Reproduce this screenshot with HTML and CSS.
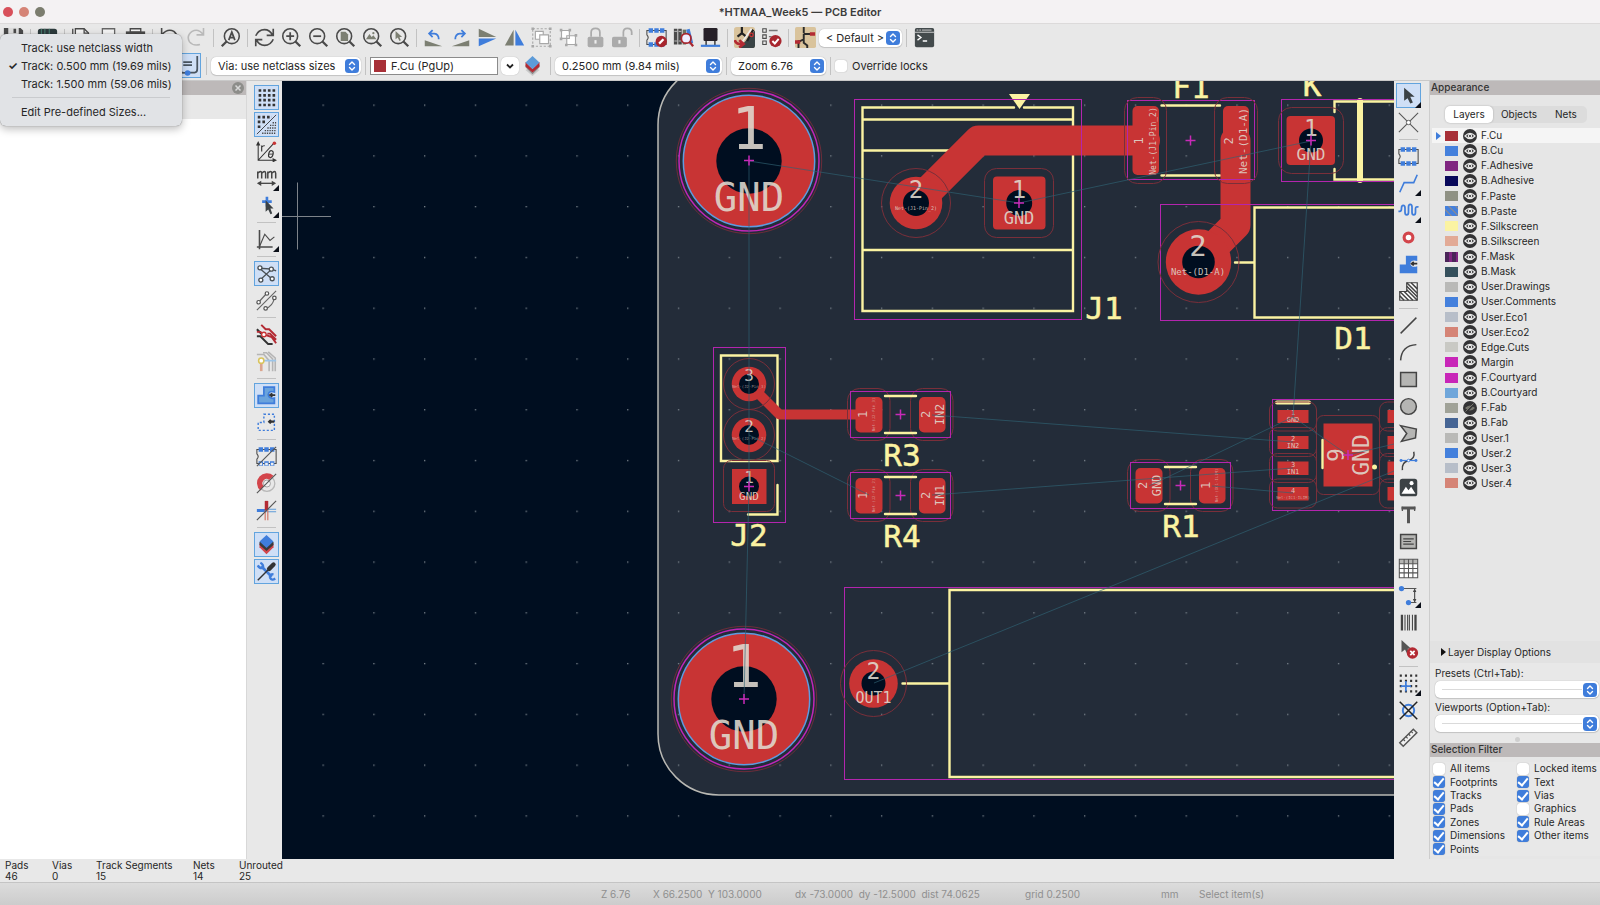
FILE: index.html
```html
<!DOCTYPE html>
<html lang="en">
<head>
<meta charset="utf-8">
<title>*HTMAA_Week5 — PCB Editor</title>
<link rel="stylesheet" href="styles.css">
</head>
<body>
<svg class="defs" aria-hidden="true">
  <symbol id="eye" viewBox="0 0 14 14"><circle cx="7" cy="7" r="7" fill="#333335"/><path d="M2 7Q7 1.800 12 7Q7 12.200 2 7Z" fill="none" stroke="#e8e8e8" stroke-width="1.200"/><circle cx="7" cy="7" r="1.700" fill="none" stroke="#e8e8e8" stroke-width="1.200"/></symbol>
  <symbol id="eye-off" viewBox="0 0 14 14"><circle cx="7" cy="7" r="7" fill="#333335"/><path d="M2 7Q7 2 12 7Q7 12 2 7Z" fill="#77776f"/><path d="M3 11L11 3" stroke="#333335" stroke-width="1.800"/><path d="M2.500 10.500L10.500 2.500" stroke="#77776f" stroke-width="1"/></symbol>
  <symbol id="step" viewBox="0 0 14 14"><rect width="14" height="14" rx="3.500" fill="#3f7ddb"/><path d="M4.500 5.500L7 3L9.500 5.500M4.500 8.500L7 11L9.500 8.500" fill="none" stroke="#fff" stroke-width="1.400" stroke-linecap="round" stroke-linejoin="round"/></symbol>
  <symbol id="lens" viewBox="0 0 24 24"><circle cx="10.500" cy="10.500" r="8.500" fill="none" stroke="#4a4a4a" stroke-width="1.800"/><path d="M16.500 16.500L22 22" stroke="#4a4a4a" stroke-width="2.600"/></symbol>
  <symbol id="fp" viewBox="0 0 24 24"><path d="M1 4H23V20H1V15Q4 12 1 9Z" fill="none" stroke="#4a4a4a" stroke-width="1.200"/><path d="M3 1.500h5v5h-5zM9.500 1.500h5v5h-5zM16 1.500h5v5h-5zM3 17.500h5v5h-5zM9.500 17.500h5v5h-5zM16 17.500h5v5h-5z" fill="#3f7ddb"/></symbol>
  <symbol id="cross" viewBox="-6 -6 12 12"><path d="M-5 0H5M0 -5V5" stroke="#c82ab8" stroke-width="1.500"/></symbol>
  <symbol id="hole" viewBox="-75 -75 150 150">
    <circle r="72.700" fill="none" stroke="#6d2c39"/><circle r="70" fill="none" stroke="#c026b8" stroke-width="1.500"/><circle r="65.700" fill="#c83434" stroke="#5f9be0" stroke-width="1.500"/><circle r="32.700" fill="#000e20"/>
  </symbol>
</svg>

<header class="titlebar">
  <div class="lights"><button class="light close" aria-label="Close"></button><button class="light mini" aria-label="Minimize"></button><button class="light full" aria-label="Full screen"></button></div>
  <h1>*HTMAA_Week5 — PCB Editor</h1>
</header>

<div class="toolbars">
  <div class="bar">
    <button class="tool" aria-label="Save"><svg viewBox="0 0 24 24"><path d="M1 1H20L23 4V23H1Z" fill="#4a4a4a"/><path d="M6 1H18V9H6Z" fill="#ddd"/><path d="M12 2h3v5h-3z" fill="#4a4a4a"/></svg></button>
    <span class="sep"></span>
    <button class="tool" aria-label="Board setup"><svg viewBox="0 0 24 24"><rect x="1" y="2" width="22" height="20" rx="3" fill="#2c3a3c"/><path d="M5 2v8M9 2v6M14 2v8" stroke="#4c8a78"/></svg></button>
    <span class="sep"></span>
    <button class="tool" aria-label="Page settings"><svg viewBox="0 0 24 24"><path d="M5 2H15L20 7V23H5Z" fill="#f4f4f4" stroke="#4a4a4a" stroke-width="1.500"/><path d="M15 2V7H20M2 2V22" fill="none" stroke="#4a4a4a" stroke-width="1.500"/></svg></button>
    <button class="tool" aria-label="Print"><svg viewBox="0 0 24 24"><path d="M5 2H19V9H5Z" fill="#f4f4f4" stroke="#666" stroke-width="1.500"/><path d="M2 9H22V19H2Z" fill="#777"/></svg></button>
    <button class="tool" aria-label="Plot"><svg viewBox="0 0 24 24"><path d="M6 2H18V6H6Z" fill="#f4f4f4" stroke="#4a4a4a" stroke-width="1.500"/><path d="M1 5H23V16H1Z" fill="#4a4a4a"/></svg></button>
    <span class="sep"></span>
    <button class="tool" aria-label="Undo"><svg viewBox="0 0 24 24"><path d="M3 1V9H11M3 9Q10 1 17 5Q23 10 19 17Q16 22 8 21" fill="none" stroke="#4a4a4a" stroke-width="1.800"/></svg></button>
    <button class="tool" aria-label="Redo"><svg viewBox="0 0 24 24"><path d="M20 1V9H12M20 9Q14 1 7 5Q0 10 4 17Q8 22 16 20" fill="none" stroke="#b9b9b9" stroke-width="1.800"/></svg></button>
    <span class="sep"></span>
    <button class="tool" aria-label="Find"><svg viewBox="0 0 24 24"><circle cx="13.500" cy="10.500" r="8.500" fill="none" stroke="#4a4a4a" stroke-width="1.800"/><path d="M7.500 16.500L2 22" stroke="#4a4a4a" stroke-width="2.600"/><path d="M10 15L13.500 6L17 15M11 12.200H16" fill="none" stroke="#4a4a4a" stroke-width="2"/></svg></button>
    <span class="sep"></span>
    <button class="tool" aria-label="Refresh"><svg viewBox="0 0 24 24"><path d="M2 10Q5 3 12 3Q18 3 21 9M22 2V9.500H14.500M22 14Q19 21 12 21Q6 21 3 15M2 22V14.500H9.500" fill="none" stroke="#4a4a4a" stroke-width="1.900"/></svg></button>
    <button class="tool" aria-label="Zoom in"><svg viewBox="0 0 24 24"><use href="#lens"/><path d="M6 10.500H15M10.500 6V15" stroke="#4a4a4a" stroke-width="2"/></svg></button>
    <button class="tool" aria-label="Zoom out"><svg viewBox="0 0 24 24"><use href="#lens"/><path d="M6 10.500H15" stroke="#4a4a4a" stroke-width="2"/></svg></button>
    <button class="tool" aria-label="Zoom to fit"><svg viewBox="0 0 24 24"><use href="#lens"/><path d="M6.500 5.500H12L15 8.500V16H6.500Z" fill="#7c7f72"/></svg></button>
    <button class="tool" aria-label="Zoom to objects"><svg viewBox="0 0 24 24"><use href="#lens"/><path d="M4.500 14L8.500 8L11 11.500L13 9.500L16.500 14Z" fill="#7c7f72"/><circle cx="13" cy="7" r="1.300" fill="#7c7f72"/></svg></button>
    <button class="tool" aria-label="Zoom to selection"><svg viewBox="0 0 24 24"><use href="#lens"/><path d="M7.500 4.500V14L10 12L12 16L13.500 15L12 11.500H15Z" fill="#7c7f72"/></svg></button>
    <span class="sep"></span>
    <button class="tool" aria-label="Rotate counterclockwise"><svg viewBox="0 0 24 24"><path d="M2 15V22H22Z" fill="#7c7f72"/><path d="M8 7.500H13Q18 8 18 14M11 3.500L7 7.500L11 11.500" fill="none" stroke="#3f7ddb" stroke-width="2"/></svg></button>
    <button class="tool" aria-label="Rotate clockwise"><svg viewBox="0 0 24 24"><path d="M22 15V22H2Z" fill="#7c7f72"/><path d="M16 7.500H11Q6 8 6 14M13 3.500L17 7.500L13 11.500" fill="none" stroke="#3f7ddb" stroke-width="2"/></svg></button>
    <button class="tool" aria-label="Flip vertical"><svg viewBox="0 0 24 24"><path d="M2 2V11.500H22Z" fill="#7c7f72"/><path d="M2 22V13H22Z" fill="#3f7ddb"/></svg></button>
    <button class="tool" aria-label="Flip horizontal"><svg viewBox="0 0 24 24"><path d="M11 3V21H1Z" fill="#7c7f72"/><path d="M13 3V21H23Z" fill="#3f7ddb"/></svg></button>
    <button class="tool" aria-label="Group"><svg viewBox="0 0 24 24"><path d="M2 2H22V22H2Z" fill="none" stroke="#a8a8a8" stroke-width="1.300" stroke-dasharray="2.500 2"/><path d="M0.500 0.500h3v3h-3zM20.500 0.500h3v3h-3zM0.500 20.500h3v3h-3zM20.500 20.500h3v3h-3z" fill="#a8a8a8"/><path d="M5 5H14V14H5Z" fill="#fff" stroke="#a8a8a8" stroke-width="1.300"/><path d="M10 9H20V19H10Z" fill="#fff" stroke="#a8a8a8" stroke-width="1.300"/></svg></button>
    <button class="tool" aria-label="Ungroup"><svg viewBox="0 0 24 24"><path d="M4 4H13V13H4ZM10 10H20V20H10Z" fill="#fff" stroke="#a8a8a8" stroke-width="1.300"/><path d="M2 2h3v3h-3zM12 2h3v3h-3zM2 12h3v3h-3zM19 8h3v3h-3zM8 19h3v3h-3zM19 19h3v3h-3z" fill="#a8a8a8"/></svg></button>
    <button class="tool" aria-label="Lock"><svg viewBox="0 0 24 24"><rect x="3" y="11" width="18" height="12" rx="2" fill="#ababab"/><path d="M7 11V6Q7 1.500 12 1.500Q17 1.500 17 6V11" fill="none" stroke="#ababab" stroke-width="2"/><path d="M12 15v4" stroke="#eee" stroke-width="2.400"/></svg></button>
    <button class="tool" aria-label="Unlock"><svg viewBox="0 0 24 24"><rect x="0" y="11" width="17" height="12" rx="2" fill="#ababab"/><path d="M13 11V6Q13 1.500 17.500 1.500Q22.500 1.500 22.500 6V9" fill="none" stroke="#ababab" stroke-width="2"/><path d="M8.500 15v4" stroke="#eee" stroke-width="2.400"/></svg></button>
    <span class="sep"></span>
    <button class="tool" aria-label="Footprint editor"><svg viewBox="0 0 24 24"><use href="#fp"/><circle cx="17.500" cy="16.500" r="6.500" fill="#a8262e"/><path d="M15 19L20 14" stroke="#fff" stroke-width="2.600"/></svg></button>
    <button class="tool" aria-label="Footprint browser"><svg viewBox="0 0 24 24"><path d="M1 2h4v18h-4zM6 2h4v18h-4z" fill="#4a4a4a"/><path d="M1.500 5h3M6.500 5h3M1.500 16h3M6.500 16h3" stroke="#ccc"/><path d="M11 3h4v17h-4z" fill="#6b705f"/><path d="M15 3L19 2L23 18L19 20Z" fill="#3f7ddb"/><circle cx="15" cy="13" r="5.500" fill="#eef" stroke="#a8262e" stroke-width="2"/><path d="M19 17L23 22" stroke="#a8262e" stroke-width="2.600"/></svg></button>
    <button class="tool" aria-label="3D viewer"><svg viewBox="0 0 24 24"><rect x="4" y="1" width="16" height="15" rx="1.500" fill="#262028"/><path d="M7 16v5M17 16v5" stroke="#555" stroke-width="2"/><path d="M1 21.500H23" stroke="#3f7ddb" stroke-width="2.500"/></svg></button>
    <span class="sep"></span>
    <button class="tool" aria-label="Update from schematic"><svg viewBox="0 0 24 24"><rect x="0" y="0" width="24" height="24" rx="3" fill="#d9c39c"/><path d="M24 4V21Q24 24 21 24H6Z" fill="#3a4446"/><path d="M9 0V7L4 11M9 7L14 11M15 16L22 3" fill="none" stroke="#222" stroke-width="2.500"/><path d="M6 22L20 2" stroke="#eee" stroke-width="1.800"/><circle cx="20" cy="9" r="2" fill="none" stroke="#c83434" stroke-width="1.500"/><path d="M1 15Q2 20 9 19.500M6 15L11 19.500L6 23.500" fill="none" stroke="#b32a33" stroke-width="3"/></svg></button>
    <button class="tool" aria-label="Design rules check"><svg viewBox="0 0 24 24"><path d="M2 2h4v4h-4zM2 9h4v4h-4zM2 16h4v4h-4z" fill="none" stroke="#4a4a4a" stroke-width="1.200"/><path d="M9 4H19M9 11H12" stroke="#777" stroke-width="1.500"/><circle cx="16.500" cy="16" r="7" fill="#a8262e"/><path d="M13 16L15.800 18.800L20.200 13.500" fill="none" stroke="#fff" stroke-width="2.200"/></svg></button>
    <span class="sep"></span>
    <button class="tool" aria-label="Schematic editor"><svg viewBox="0 0 24 24"><rect x="0" y="0" width="24" height="24" rx="2" fill="#d9c39c"/><path d="M10 0V7M10 8H18M10 8V14L4 17M10 14V18L14 21V24M4 15V24" fill="none" stroke="#2a2a2a" stroke-width="2.200"/><path d="M17 6h6v4h-6zM0 15h6v4h-6z" fill="#b32a33"/></svg></button>
    <label class="combo mid"><select aria-label="Layout"><option>&lt; Default &gt;</option></select><svg><use href="#step"/></svg></label>
    <span class="sep wide"></span>
    <button class="tool" aria-label="Scripting console"><svg viewBox="0 0 24 24"><rect x="1" y="1" width="22" height="22" rx="2" fill="#434a4c"/><path d="M1 6H23" stroke="#ddd" stroke-width="1"/><path d="M3 3.500h2M6 3.500h2M9 3.500h11" stroke="#ddd"/><path d="M4 9L8 12L4 15M10 16H15" fill="none" stroke="#fff" stroke-width="1.500"/></svg></button>
  </div>
  <div class="bar second">
    <button class="tool on" aria-label="Use existing track width"><svg viewBox="0 0 24 24"><path d="M1 19Q5 21 10 20H19Q22 20 22 16V1M6 8H16M6 11.500H16" fill="none" stroke="#4a5560" stroke-width="2"/><circle cx="11" cy="20.500" r="3.200" fill="#3f7ddb"/></svg></button>
    <span class="sep wide"></span>
    <label class="combo via"><select aria-label="Via size"><option>Via: use netclass sizes</option></select><svg><use href="#step"/></svg></label>
    <span class="sep wide"></span>
    <label class="layerbox"><i class="sw cu"></i><select aria-label="Active layer"><option>F.Cu (PgUp)</option></select></label>
    <button class="drop" aria-label="Open layer list"><svg viewBox="0 0 10 10"><path d="M2 3.500L5 6.500L8 3.500" fill="none" stroke="#222" stroke-width="1.800"/></svg></button>
    <button class="tool" aria-label="Layer pair"><svg viewBox="0 0 24 24"><path d="M4 17L12 24L20 17L12 13Z" fill="#c9c9c9"/><path d="M4 11L12 20L20 11V14L12 22L4 14Z" fill="#8a8a8a"/><path d="M4 8V13L12 20L20 13V8L12 16Z" fill="#b32a33"/><path d="M12 1L20 8.500L12 16L4 8.500Z" fill="#5d9bd8"/></svg></button>
    <span class="sep wide"></span>
    <label class="combo grid"><select aria-label="Grid"><option>0.2500 mm (9.84 mils)</option></select><svg><use href="#step"/></svg></label>
    <span class="sep wide"></span>
    <label class="combo zoom"><select aria-label="Zoom"><option>Zoom 6.76</option></select><svg><use href="#step"/></svg></label>
    <span class="sep wide"></span>
    <label class="check locks"><input type="checkbox">Override locks</label>
  </div>
</div>

<main class="work">
  <aside class="left">
    <div class="cap"><button class="x" aria-label="Close panel"><svg viewBox="0 0 12 12"><circle cx="6" cy="6" r="6" fill="#8d8d8a"/><path d="M3.500 3.500L8.500 8.500M8.500 3.500L3.500 8.500" stroke="#d8d8d8" stroke-width="1.500"/></svg></button></div>
    <div class="list"></div>
  </aside>

  <nav class="tools" aria-label="Display tools">
    <button class="tool on" aria-label="Grid"><svg viewBox="0 0 24 24"><path d="M3 4H22M3 9.500H22M3 15H22M3 20.500H22" stroke="#333" stroke-width="3" stroke-dasharray="3 2.300"/></svg></button>
    <button class="tool on" aria-label="Grid overrides"><svg viewBox="0 0 24 24"><path d="M2 3.500H18M2 9H12M2 14.500H6" stroke="#333" stroke-width="3" stroke-dasharray="3 2.300"/><path d="M1 23L23 1" stroke="#333"/><path d="M19 10H23M16 13H23M13 16H23M10 19H23M7 22H23" stroke="#444" stroke-width="1.500" stroke-dasharray="1.500 1.200"/></svg></button>
    <button class="tool" aria-label="Polar coordinates"><svg viewBox="0 0 24 24"><path d="M2.500 3V22H22M2.500 22L20 3" fill="none" stroke="#333" stroke-width="1.200"/><path d="M2.500 0L5 5H0ZM24 22L19 19.500V24.500Z" fill="#333"/><circle cx="21" cy="2.500" r="2" fill="#c83434"/><path d="M6.500 12V5M6.500 7Q8 5 10 5.500" fill="none" stroke="#333" stroke-width="1.300"/><ellipse cx="17" cy="15" rx="2.500" ry="4" transform="rotate(15 17 15)" fill="none" stroke="#333" stroke-width="1.300"/><path d="M14.500 15H19.500" stroke="#333"/></svg></button>
    <button class="tool more" aria-label="Units"><svg viewBox="0 0 24 24"><path d="M2 12V4M2 6Q6 2 6.500 6V12M6.500 6Q10.500 2 11 6V12M13.500 12V4M13.500 6Q17.500 2 18 6V12M18 6Q22 2 22.500 6V12" fill="none" stroke="#444" stroke-width="1.700"/><path d="M3 17.500H21" stroke="#444" stroke-width="1.500"/><path d="M1 17.500L6 14.500V20.500ZM23 17.500L18 14.500V20.500Z" fill="#444"/></svg></button>
    <button class="tool more" aria-label="Cursor"><svg viewBox="0 0 24 24"><path d="M7 7.500H18M12.500 2V13" stroke="#3f7ddb" stroke-width="3"/><path d="M11 6V19L14 16.500L16.500 22L18.500 21L16.500 15.500H20Z" fill="#3c4245"/></svg></button>
    <span class="hsep"></span>
    <button class="tool more" aria-label="Line modes"><svg viewBox="0 0 24 24"><path d="M4 1V23M1 20.500H19" stroke="#4a4a4a" stroke-width="1.800"/><path d="M4 20L10 6L16 13L21 9" fill="none" stroke="#4a4a4a" stroke-width="1.300"/></svg></button>
    <span class="hsep"></span>
    <button class="tool on" aria-label="Ratsnest"><svg viewBox="0 0 24 24"><path d="M4 6L18 7L4 20M4 6L18 18M18 7L23 9" fill="none" stroke="#4a5055" stroke-width="1.500"/><g fill="#fff" stroke="#4a5055" stroke-width="1.500"><circle cx="4.500" cy="5.500" r="2.300"/><circle cx="17.500" cy="7" r="2.300"/><circle cx="5.500" cy="19.500" r="2.300"/><circle cx="18.500" cy="18" r="2.300"/></g></svg></button>
    <button class="tool" aria-label="Curved ratsnest"><svg viewBox="0 0 24 24"><path d="M1 23L23 1M3 14L12 4M11 21Q19 19 21 9" fill="none" stroke="#666" stroke-width="1.300"/><g fill="#fff" stroke="#555" stroke-width="1.400"><circle cx="3" cy="14" r="2"/><circle cx="12.500" cy="4" r="2"/><circle cx="11" cy="21" r="2"/><circle cx="21" cy="9" r="2"/></g></svg></button>
    <span class="hsep"></span>
    <button class="tool" aria-label="High contrast"><svg viewBox="0 0 24 24"><path d="M1 14H5L14 23H19M1 6L7 12" fill="none" stroke="#333" stroke-width="2.300"/><path d="M6 1L11 6H15L23 14M1 9H5L9 12L18 15L23 22M13 11H16L23 18" fill="none" stroke="#b32a33" stroke-width="2.200"/><circle cx="9" cy="12" r="2.600" fill="#fff" stroke="#c83434" stroke-width="1.500"/></svg></button>
    <button class="tool" aria-label="Net highlighting"><svg viewBox="0 0 24 24"><path d="M1 4H9L15 11V23M8 2H12L19 9V23M14 1L22 8V23" fill="none" stroke="#b5b5b5" stroke-width="1.800"/><path d="M6 11H23" stroke="#9cc5e8" stroke-width="2"/><path d="M6 13V23" stroke="#dba58e" stroke-width="3"/><circle cx="6" cy="11" r="3" fill="#fff" stroke="#d9c45c" stroke-width="1.800"/></svg></button>
    <span class="hsep"></span>
    <button class="tool on" aria-label="Filled zones"><svg viewBox="0 0 24 24"><path d="M9 2.500H21V8Q15 6 14 11Q15 16 21 15V21H2.500V12H9Z" fill="#6aa3dc" stroke="#3f7ddb" stroke-width="2"/><path d="M16 11.500H22M18.500 9.500L16 11.500L18.500 13.500" fill="#333" stroke="#333" stroke-width="2"/></svg></button>
    <button class="tool" aria-label="Zone outlines"><svg viewBox="0 0 24 24"><path d="M9 2.500H21V21H2.500V12H9Z" fill="none" stroke="#3f7ddb" stroke-width="1.600" stroke-dasharray="2.400 2.200"/><path d="M15 11H21M17 9L15 11L17 13" fill="#333" stroke="#333" stroke-width="2.400"/></svg></button>
    <span class="hsep"></span>
    <button class="tool" aria-label="Footprint outlines"><svg viewBox="0 0 24 24"><use href="#fp"/><path d="M4 19h3v3h-3zM10.500 19h3v3h-3zM17 19h3v3h-3z" fill="#eee"/><path d="M1 23L23 1" stroke="#555" stroke-width="1.300"/></svg></button>
    <button class="tool" aria-label="Via outlines"><svg viewBox="0 0 24 24"><circle cx="12.500" cy="12" r="9" fill="#e8e8e8" stroke="#b8b8b8" stroke-width="1.500"/><path d="M5 20A11 11 0 0 1 20 3L15 8A4.500 4.500 0 0 0 9 15Z" fill="#d3454b"/><circle cx="12.500" cy="12" r="4" fill="#f2f2f2" stroke="#999"/><path d="M1 23L23 1" stroke="#555" stroke-width="1.300"/></svg></button>
    <button class="tool" aria-label="Track outlines"><svg viewBox="0 0 24 24"><path d="M1 12H12" stroke="#3f7ddb" stroke-width="3.500"/><path d="M12 10.500H23M12 13.500H23" stroke="#5d9bd8" stroke-width="1.200"/><path d="M12 1V12" stroke="#b32a33" stroke-width="4"/><path d="M10.500 12V23M13.500 12V23" stroke="#d37b6a" stroke-width="1.400"/><path d="M1 23L23 1" stroke="#555" stroke-width="1.300"/></svg></button>
    <span class="hsep"></span>
    <button class="tool on" aria-label="Appearance manager"><svg viewBox="0 0 24 24"><path d="M4 11L12 6L20 11V15L12 23L4 15Z" fill="#d3454b"/><path d="M4 9L20 9V12.500L12 19.500L4 12.500Z" fill="#3a3a3a"/><path d="M12 1L20 8.500L12 16L4 8.500Z" fill="#3f7ddb"/></svg></button>
    <button class="tool on" aria-label="Properties manager"><svg viewBox="0 0 24 24"><path d="M6 6L18 18" stroke="#3f7ddb" stroke-width="3"/><path d="M2 5Q4 9 8 8Q9 4 5 2M16 19Q18 23 22 20M16 19Q15 15 20 15" fill="none" stroke="#3f7ddb" stroke-width="2.600"/><path d="M2 22L14 10" stroke="#333" stroke-width="1.600"/><path d="M15 9L20 4" stroke="#333" stroke-width="5" stroke-linecap="round"/></svg></button>
  </nav>

  <section class="canvas">
    <svg viewBox="282 81 1112 778" preserveAspectRatio="xMinYMin slice" role="img" aria-label="Board layout">
      <defs>
        <pattern id="dots" x="297.600" y="79.600" width="50.770" height="50.770" patternUnits="userSpaceOnUse"><rect x="24.900" y="24.900" width="1.300" height="1.300" fill="#7a848c"/></pattern>
      </defs>
      <rect x="282" y="81" width="3000" height="2000" fill="#000e20"/>
      <rect x="658" y="64" width="3000" height="731" rx="61" fill="#232c39" stroke="#b9b9b4" stroke-width="1.500"/>
      <rect x="282" y="81" width="3000" height="2000" fill="url(#dots)"/>

      <g class="silk">
        <path d="M1014 107.500H862.500V311H1073V107.500H1024M862.500 119.500H1073M862.500 150.500H1073M862.500 250H1073"/>
        <path d="M1009 94H1030L1019.500 109Z" fill="#fbf3a2" stroke="none"/>
        <path d="M1161.500 105.500H1220M1161.500 175.500H1220"/>
        <path d="M1334.500 112V101.500H3000M1334.500 169V179.500H3000"/>
        <path class="bar6" d="M1360 101V180"/>
        <path d="M3000 207.500H1254.500V317.500H3000M1235 262.500H1254"/>
        <path d="M721 355.500H777.500V461H721ZM777.500 485V514.500H748"/>
        <path d="M3000 590H949.500V777H3000M902.500 683.500H949.500"/>
        <path class="bar4" d="M1277 402.500H1309"/>
      </g>

      <g class="track">
        <path d="M916 203L978.500 140.500H1145" stroke-width="30"/>
        <path d="M1235.500 140.500V225L1198.500 262" stroke-width="30"/>
        <path d="M749 384L779.500 414.500H869" stroke-width="10"/>
      </g>

      <g class="yard">
        <rect x="854.500" y="99.500" width="227" height="220"/>
        <rect x="1127.500" y="100.500" width="127" height="79"/>
        <rect x="1281.500" y="99.500" width="2000" height="82"/>
        <rect x="1160.500" y="204.500" width="2000" height="116"/>
        <rect x="713.500" y="347.500" width="72" height="175"/>
        <rect x="1272.500" y="399.500" width="2000" height="111"/>
        <rect x="844.500" y="587.500" width="2000" height="192"/>
      </g>

      <g class="clear">
        <circle cx="916" cy="203" r="34.500"/><rect x="984.500" y="168.500" width="69" height="69" rx="12"/>
        <rect x="1124.500" y="97.500" width="42" height="86" rx="13"/><rect x="1214.500" y="97.500" width="43" height="86" rx="13"/>
        <rect x="1278.500" y="107.500" width="65" height="66" rx="13"/><circle cx="1198.500" cy="262" r="40.500"/>
        <circle cx="749" cy="384" r="25.500"/><circle cx="749" cy="435" r="25.500"/><rect x="723.500" y="460.500" width="51" height="51" rx="8"/>
        <circle cx="873.500" cy="683.500" r="33"/>
        <rect x="1269.500" y="402" width="47" height="29" rx="8"/><rect x="1269.500" y="427.500" width="47" height="29" rx="8"/><rect x="1269.500" y="453.500" width="47" height="29" rx="8"/><rect x="1269.500" y="479" width="47" height="29" rx="8"/>
        <rect x="1379.500" y="402" width="47" height="29" rx="8"/><rect x="1379.500" y="427.500" width="47" height="29" rx="8"/><rect x="1379.500" y="453.500" width="47" height="29" rx="8"/><rect x="1379.500" y="479" width="47" height="29" rx="8"/>
        <rect x="1316.500" y="415.500" width="63" height="79" rx="7"/>
      </g>

      <g class="pads">
        <use href="#hole" x="674" y="86" width="150" height="150"/><use href="#hole" x="669" y="624" width="150" height="150"/>
        <circle cx="916" cy="203" r="26.300"/><rect x="993" y="176.500" width="52.500" height="53" rx="4"/>
        <rect x="1132.500" y="106" width="26.500" height="69" rx="5"/><rect x="1223" y="106" width="26" height="69" rx="5"/>
        <rect x="1286.500" y="116" width="48.500" height="49" rx="4"/><circle cx="1198.500" cy="262" r="32.700"/>
        <circle cx="749" cy="384" r="17.300"/><circle cx="749" cy="435" r="17.300"/><rect x="732" y="469" width="34.500" height="35"/>
        <circle cx="873.500" cy="683.500" r="24.300"/>
        <path d="M1277.500 410h31v13h-31zM1277.500 436h31v13h-31zM1277.500 461.500h31v13.500h-31zM1277.500 487h31v13.500h-31zM1387.500 410h31v13h-31zM1387.500 436h31v13h-31zM1387.500 461.500h31v13.500h-31zM1387.500 487h31v13.500h-31z"/>
        <rect x="1323.500" y="423.500" width="49" height="63"/>
      </g>
      <g fill="#000e20">
        <circle cx="916" cy="203" r="13"/><circle cx="1019.200" cy="203" r="13"/><circle cx="1311" cy="140.500" r="12"/><circle cx="1198.500" cy="262" r="16.300"/>
        <circle cx="749" cy="384" r="10"/><circle cx="749" cy="435" r="10"/><circle cx="749" cy="486.500" r="10"/><circle cx="873.500" cy="683.500" r="12"/>
      </g>

      <g id="res">
        <g class="clear"><rect x="847.500" y="388.500" width="42.500" height="52" rx="12"/><rect x="910.500" y="388.500" width="42.500" height="52" rx="12"/></g>
        <g class="yard"><rect x="850.500" y="391.500" width="100" height="46"/></g>
        <g class="pads"><rect x="855.500" y="397" width="27" height="35.500" rx="5"/><rect x="919" y="397" width="26.500" height="35.500" rx="5"/></g>
        <path class="silk" d="M885 396H916M885 433H916"/>
        <use href="#cross" x="894.500" y="408.500" width="12" height="12"/>
      </g>
      <use href="#res" y="81"/><use href="#res" x="280" y="71"/>
      <path class="silk" d="M1322.500 440V468"/><circle cx="1374.500" cy="467" r="2.500" fill="#fbf3a2"/>

      <g class="padtext">
        <text x="749" y="149" class="f59">1</text><text x="749" y="211" class="f39">GND</text>
        <text x="744" y="687" class="f59">1</text><text x="744" y="749" class="f39">GND</text>
        <text x="916" y="198" class="f24">2</text><text x="916" y="210" class="f5">Net-(J1-Pin_2)</text>
        <text x="1019" y="198" class="f24">1</text><text x="1019" y="224" class="f17">GND</text>
        <text x="1311" y="136" class="f23">1</text><text x="1311" y="160" class="f16">GND</text>
        <text x="1198" y="256" class="f29">2</text><text x="1198" y="275" class="f9">Net-(D1-A)</text>
        <text transform="translate(1143 141) rotate(-90)" class="f12">1</text><text transform="translate(1155.500 141) rotate(-90)" class="f8">Net-(J1-Pin_2)</text>
        <text transform="translate(1233 141) rotate(-90)" class="f12">2</text><text transform="translate(1247 141) rotate(-90)" class="f11">Net-(D1-A)</text>
        <text x="749" y="381" class="f16">3</text><text x="749" y="388" class="f4">Net-(J2-Pin_3)</text>
        <text x="749" y="432" class="f16">2</text><text x="749" y="440" class="f4">Net-(J2-Pin_2)</text>
        <text x="749" y="483" class="f16">1</text><text x="749" y="500" class="f11">GND</text>
        <text transform="translate(867 414.500) rotate(-90)" class="f12">1</text><text transform="translate(875 414.500) rotate(-90)" class="f4">Net-(J2-Pin_3)</text>
        <text transform="translate(929.500 414.500) rotate(-90)" class="f12">2</text><text transform="translate(943.500 414.500) rotate(-90)" class="f12">IN2</text>
        <text transform="translate(867 495.500) rotate(-90)" class="f12">1</text><text transform="translate(875 495.500) rotate(-90)" class="f4">Net-(J2-Pin_2)</text>
        <text transform="translate(929.500 495.500) rotate(-90)" class="f12">2</text><text transform="translate(943.500 495.500) rotate(-90)" class="f12">IN1</text>
        <text transform="translate(1147 485.500) rotate(-90)" class="f12">2</text><text transform="translate(1160.500 485.500) rotate(-90)" class="f12">GND</text>
        <text transform="translate(1210 485.500) rotate(-90)" class="f12">1</text><text transform="translate(1218 485.500) rotate(-90)" class="f4">Net-(IC1-ILIM)</text>
        <text x="1293" y="415" class="f7">1</text><text x="1293" y="422" class="f7">GND</text>
        <text x="1293" y="441" class="f7">2</text><text x="1293" y="448" class="f7">IN2</text>
        <text x="1293" y="467" class="f7">3</text><text x="1293" y="474" class="f7">IN1</text>
        <text x="1293" y="493" class="f7">4</text><text x="1293" y="499" class="f4">Net-(IC1-ILIM)</text>
        <text transform="translate(1344 455) rotate(-90)" class="f23">9</text><text transform="translate(1368.500 455) rotate(-90)" class="f23">GND</text>
        <text x="873.500" y="679" class="f23">2</text><text x="873.500" y="703" class="f15">OUT1</text>
      </g>
      <g class="label">
        <text x="1104" y="319">J1</text><text x="1191" y="98">F1</text><text x="1312" y="96">K</text><text x="1353" y="349">D1</text>
        <text x="749" y="546">J2</text><text x="902" y="466">R3</text><text x="902" y="547">R4</text><text x="1181" y="537">R1</text>
      </g>
      <path class="rats" d="M749 161L1019 203L1311 141L1293 417L1348 455L1394 444M749 161V486L744 699M749 435L869 495M932 415L1293 442M932 495L1293 468M1149 486L1293 417M1212 486L1293 493M874 683L1394 471"/>
      <g>
        <use href="#cross" x="743" y="154.500" width="12" height="12"/><use href="#cross" x="738" y="693" width="12" height="12"/>
        <use href="#cross" x="1013" y="197" width="12" height="12"/><use href="#cross" x="1184.500" y="134.500" width="12" height="12"/>
        <use href="#cross" x="1305" y="134.500" width="12" height="12"/><use href="#cross" x="743" y="480.500" width="12" height="12"/>
        <use href="#cross" x="1342" y="449" width="12" height="12"/>
      </g>
      <path d="M282 216.500H331M297.500 182.500V249.500" stroke="#7d838a" stroke-width="1"/>
    </svg>
  </section>

  <nav class="tools right" aria-label="Drawing tools">
    <button class="tool on more" aria-label="Select"><svg viewBox="0 0 24 24"><path d="M7 3V18L11 15L14 21L17 20L14 13.500H19Z" fill="#3c4245"/></svg></button>
    <button class="tool" aria-label="Local ratsnest"><svg viewBox="0 0 24 24"><path d="M1 1L23 23M23 1L1 23" stroke="#555" stroke-width="1.200"/><circle cx="12" cy="12" r="2.500" fill="#fff" stroke="#555"/></svg></button>
    <span class="hsep"></span>
    <button class="tool" aria-label="Place footprint"><svg viewBox="0 0 24 24"><use href="#fp"/></svg></button>
    <button class="tool more" aria-label="Route track"><svg viewBox="0 0 24 24"><path d="M2 22L7 11H18L22 2" fill="none" stroke="#3f7ddb" stroke-width="1.800"/></svg></button>
    <button class="tool more" aria-label="Tune length"><svg viewBox="0 0 24 24"><path d="M0.500 13H2Q4 13 4 9Q4 6 6 6T8 9V14Q8 17 10 17T12 14V8Q12 5 14 5T16 8V14Q16 17 18 17T20 14V10Q20 7 23.500 8" fill="none" stroke="#3f7ddb" stroke-width="2"/></svg></button>
    <button class="tool" aria-label="Place via"><svg viewBox="0 0 24 24"><circle cx="12" cy="12" r="5" fill="#fff" stroke="#d3454b" stroke-width="3.600"/></svg></button>
    <button class="tool" aria-label="Draw zone"><svg viewBox="0 0 24 24"><path d="M9 2H22V8Q15 6 14 11Q15 16 22 14V22H2V12H9Z" fill="#3f7ddb"/><path d="M16 11H22M18 9L15.500 11L18 13" fill="#333" stroke="#333" stroke-width="2"/></svg></button>
    <button class="tool" aria-label="Rule area"><svg viewBox="0 0 24 24"><path d="M10 2H22V22H2V12H10Z" fill="#fff" stroke="#444" stroke-width="1.400"/><path d="M10 2L22 14M10 6L22 18M10 10L22 22M15 2L22 9M7 12L17 22M2 12L12 22M2 17L7 22" stroke="#444" stroke-width="1.800"/></svg></button>
    <span class="hsep"></span>
    <button class="tool" aria-label="Draw line"><svg viewBox="0 0 24 24"><path d="M3 21L21 3" stroke="#444" stroke-width="1.700"/></svg></button>
    <button class="tool" aria-label="Draw arc"><svg viewBox="0 0 24 24"><path d="M3 21Q4 4 21 3" fill="none" stroke="#444" stroke-width="1.700"/></svg></button>
    <button class="tool" aria-label="Draw rectangle"><svg viewBox="0 0 24 24"><rect x="3" y="4" width="18" height="16" fill="#b5b5b3" stroke="#444" stroke-width="1.700"/></svg></button>
    <button class="tool" aria-label="Draw circle"><svg viewBox="0 0 24 24"><circle cx="12" cy="12" r="9" fill="#b5b5b3" stroke="#444" stroke-width="1.700"/></svg></button>
    <button class="tool" aria-label="Draw polygon"><svg viewBox="0 0 24 24"><path d="M3 3L21 7L20 17L4 21L10 12Z" fill="#b5b5b3" stroke="#444" stroke-width="1.700"/></svg></button>
    <button class="tool" aria-label="Draw Bezier"><svg viewBox="0 0 24 24"><path d="M5 23Q4 14 12 12Q20 10 18 2" fill="none" stroke="#444" stroke-width="1.700"/><path d="M3 12H21" stroke="#3f7ddb" stroke-width="1.400"/><circle cx="3.500" cy="12" r="1.700" fill="#3f7ddb"/><circle cx="20.500" cy="12" r="1.700" fill="#3f7ddb"/><circle cx="12" cy="12" r="1.500" fill="#fff" stroke="#3f7ddb"/></svg></button>
    <button class="tool" aria-label="Place image"><svg viewBox="0 0 24 24"><rect x="2" y="2" width="20" height="20" rx="3" fill="#3c4245"/><path d="M4 19L9 11L12 15L15 11L20 19Z" fill="#fff"/><circle cx="15.500" cy="7" r="2.300" fill="#fff"/></svg></button>
    <button class="tool" aria-label="Place text"><svg viewBox="0 0 24 24"><path d="M4 4.500H20M12 4V22" stroke="#555" stroke-width="3.400"/><path d="M5 3V8M19 3V8" stroke="#555" stroke-width="1.500"/></svg></button>
    <button class="tool" aria-label="Place text box"><svg viewBox="0 0 24 24"><rect x="3" y="4" width="18" height="16" fill="#b5b5b3" stroke="#444" stroke-width="1.700"/><path d="M6 9H18M6 12H15M6 15H18" stroke="#444" stroke-width="1.200"/></svg></button>
    <button class="tool" aria-label="Place table"><svg viewBox="0 0 24 24"><rect x="1.500" y="1.500" width="21" height="21" fill="#fff"/><path d="M1.500 1.500h21v5h-21z" fill="#b5b5b3"/><path d="M1.500 1.500H22.500V22.500H1.500ZM1.500 6.500H22.500M1.500 12H22.500M1.500 17H22.500M7 1.500V22.500M12 1.500V22.500M17 1.500V22.500" fill="none" stroke="#555" stroke-width="1.200"/></svg></button>
    <button class="tool more" aria-label="Dimension"><svg viewBox="0 0 24 24"><path d="M4 4H21M12 20H21M19 5V19" stroke="#555" stroke-width="1.400"/><path d="M19 4L21 8H17ZM19 20L21 16H17Z" fill="#444"/><circle cx="4" cy="4" r="3" fill="#3f7ddb"/><circle cx="12" cy="20" r="3" fill="#3f7ddb"/></svg></button>
    <button class="tool" aria-label="Barcode"><svg viewBox="0 0 24 24"><path d="M4.500 3V21M20 3V21" stroke="#444" stroke-width="2.600"/><path d="M8 3V21M11 3V21M13 3V21M16.500 3V21" stroke="#444" stroke-width="1.200"/></svg></button>
    <button class="tool" aria-label="Delete"><svg viewBox="0 0 24 24"><path d="M4 1V15L8 12L11 18L13 17L11 11H15Z" fill="#555"/><circle cx="16.500" cy="16" r="6.500" fill="#b32a33"/><path d="M14 13.500L19 18.500M19 13.500L14 18.500" stroke="#fff" stroke-width="2"/></svg></button>
    <span class="hsep"></span>
    <button class="tool more" aria-label="Grid origin"><svg viewBox="0 0 24 24"><path d="M2 3H22M2 9H22M2 15H22M2 21H22" stroke="#333" stroke-width="2.400" stroke-dasharray="2.400 3.500"/><path d="M3 15H15M9 9V21" stroke="#3f7ddb" stroke-width="2"/></svg></button>
    <button class="tool" aria-label="Drill origin"><svg viewBox="0 0 24 24"><circle cx="12" cy="12" r="6.500" fill="none" stroke="#3f7ddb" stroke-width="2.200"/><path d="M2 2L22 22M22 2L2 22" stroke="#222" stroke-width="1.700"/></svg></button>
    <button class="tool" aria-label="Measure"><svg viewBox="0 0 24 24"><path d="M2 18L17.500 2.500L21.500 6.500L6 22Z" fill="#f2f2f2" stroke="#555" stroke-width="1.700"/><path d="M6 14L8 16M9 11L11 13M12 8L14 10M15 5L17 7" stroke="#555" stroke-width="1.400"/></svg></button>
  </nav>

  <aside class="panel">
    <h2 class="cap">Appearance</h2>
    <div class="tabs" role="tablist"><button role="tab" class="active" aria-selected="true">Layers</button><button role="tab">Objects</button><button role="tab">Nets</button></div>
    <ul class="layers">
      <li class="current"><b></b><i class="sw cu"></i><svg><use href="#eye"/></svg>F.Cu</li>
      <li><b></b><i class="sw blue"></i><svg><use href="#eye"/></svg>B.Cu</li>
      <li><b></b><i class="sw purple"></i><svg><use href="#eye"/></svg>F.Adhesive</li>
      <li><b></b><i class="sw navy"></i><svg><use href="#eye"/></svg>B.Adhesive</li>
      <li><b></b><i class="sw paste"></i><svg><use href="#eye"/></svg>F.Paste</li>
      <li><b></b><i class="sw bpaste"></i><svg><use href="#eye"/></svg>B.Paste</li>
      <li><b></b><i class="sw cream"></i><svg><use href="#eye"/></svg>F.Silkscreen</li>
      <li><b></b><i class="sw peach"></i><svg><use href="#eye"/></svg>B.Silkscreen</li>
      <li><b></b><i class="sw fmask"></i><svg><use href="#eye"/></svg>F.Mask</li>
      <li><b></b><i class="sw bmask"></i><svg><use href="#eye"/></svg>B.Mask</li>
      <li><b></b><i class="sw gray"></i><svg><use href="#eye"/></svg>User.Drawings</li>
      <li><b></b><i class="sw blue"></i><svg><use href="#eye"/></svg>User.Comments</li>
      <li><b></b><i class="sw steel"></i><svg><use href="#eye"/></svg>User.Eco1</li>
      <li><b></b><i class="sw coral"></i><svg><use href="#eye"/></svg>User.Eco2</li>
      <li><b></b><i class="sw edge"></i><svg><use href="#eye"/></svg>Edge.Cuts</li>
      <li><b></b><i class="sw magenta"></i><svg><use href="#eye"/></svg>Margin</li>
      <li><b></b><i class="sw magenta"></i><svg><use href="#eye"/></svg>F.Courtyard</li>
      <li><b></b><i class="sw sky"></i><svg><use href="#eye"/></svg>B.Courtyard</li>
      <li><b></b><i class="sw ffab"></i><svg><use href="#eye-off"/></svg>F.Fab</li>
      <li><b></b><i class="sw bfab"></i><svg><use href="#eye"/></svg>B.Fab</li>
      <li><b></b><i class="sw gray"></i><svg><use href="#eye"/></svg>User.1</li>
      <li><b></b><i class="sw blue"></i><svg><use href="#eye"/></svg>User.2</li>
      <li><b></b><i class="sw steel"></i><svg><use href="#eye"/></svg>User.3</li>
      <li><b></b><i class="sw coral"></i><svg><use href="#eye"/></svg>User.4</li>
    </ul>
    <button class="disclose"><b></b>Layer Display Options</button>
    <div class="views">
      <label for="presets">Presets (Ctrl+Tab):</label>
      <div class="combo line"><select id="presets"><option></option></select><hr><svg><use href="#step"/></svg></div>
      <label for="viewports">Viewports (Option+Tab):</label>
      <div class="combo line"><select id="viewports"><option></option></select><hr><svg><use href="#step"/></svg></div>
      <span class="grip"></span>
    </div>
    <h2 class="cap">Selection Filter</h2>
    <div class="filter">
      <label class="check"><input type="checkbox">All items</label><label class="check"><input type="checkbox">Locked items</label>
      <label class="check"><input type="checkbox" checked>Footprints</label><label class="check"><input type="checkbox" checked>Text</label>
      <label class="check"><input type="checkbox" checked>Tracks</label><label class="check"><input type="checkbox" checked>Vias</label>
      <label class="check"><input type="checkbox" checked>Pads</label><label class="check"><input type="checkbox">Graphics</label>
      <label class="check"><input type="checkbox" checked>Zones</label><label class="check"><input type="checkbox" checked>Rule Areas</label>
      <label class="check"><input type="checkbox" checked>Dimensions</label><label class="check"><input type="checkbox" checked>Other items</label>
      <label class="check"><input type="checkbox" checked>Points</label>
    </div>
  </aside>
</main>

<dl class="info">
  <div><dt>Pads</dt><dd>46</dd></div><div><dt>Vias</dt><dd>0</dd></div><div><dt>Track Segments</dt><dd>15</dd></div><div><dt>Nets</dt><dd>14</dd></div><div><dt>Unrouted</dt><dd>25</dd></div>
</dl>
<footer class="status"><span></span><span>Z 6.76</span><span>X 66.2500&nbsp; Y 103.0000</span><span>dx -73.0000&nbsp; dy -12.5000&nbsp; dist 74.0625</span><span>grid 0.2500</span><span>mm</span><span>Select item(s)</span></footer>

<div class="menu" role="menu">
  <button role="menuitem"><i></i>Track: use netclass width</button>
  <button role="menuitem"><i>✓</i>Track: 0.500 mm (19.69 mils)</button>
  <button role="menuitem"><i></i>Track: 1.500 mm (59.06 mils)</button>
  <hr>
  <button role="menuitem"><i></i>Edit Pre-defined Sizes...</button>
</div>
</body>
</html>
```
FILE: styles.css
```css
* { box-sizing: border-box; }
body {
  margin: 0; height: 100vh; display: flex; flex-direction: column; overflow: hidden;
  background: #e8e8e8; color: #262626; font: 11px/14px Inter, "Liberation Sans", sans-serif;
}
button, select, input { font: inherit; color: inherit; margin: 0; padding: 0; border: 0; background: none; }
h1, h2, ul, dl, dd { margin: 0; padding: 0; }
.defs { position: absolute; width: 0; height: 0; }

.titlebar { height: 24px; flex: none; display: grid; grid-template-columns: 1fr auto 1fr; align-items: center; background: #f4f2f3; border-bottom: 1px solid #dcdada; }
.titlebar h1 { font-size: 11px; font-weight: 600; color: #3c3c3c; }
.lights { display: flex; gap: 6px; padding-left: 3px; }
.light { width: 10px; height: 10px; border-radius: 50%; }
.close { background: #d8505a; }
.mini { background: #d58476; }
.full { background: #7b7d6e; }

.toolbars { flex: none; height: 57px; border-bottom: 1px solid #c9c9c9; }
.bar { display: flex; align-items: center; height: 27px; }
.bar.second { height: 29px; padding-left: 175px; }
.tool { flex: none; width: 25px; height: 25px; margin: 1px; display: grid; place-items: center; position: relative; }
.tool svg { width: 21px; height: 21px; display: block; }
.tool.on { background: #cfdff6; outline: 1px solid #62a4de; outline-offset: -1px; }
.tool.more::after { content: ""; position: absolute; right: 0; bottom: 0; border: 3px solid #0b0f18; border-top-color: transparent; border-left-color: transparent; }
.sep { flex: none; width: 1px; height: 18px; margin: 0 3px; background: #c2c2c2; }
.sep.wide { margin: 0 4px; }

.combo { display: grid; align-items: center; height: 18px; background: #fff; border-radius: 5px; box-shadow: 0 0 1px #0005, 0 1px 1px #0002; }
.combo > * { grid-area: 1 / 1; }
.combo select { appearance: none; width: 100%; height: 18px; padding: 0 18px 0 7px; outline: 0; }
.combo svg { width: 14px; height: 14px; justify-self: end; margin-right: 2px; pointer-events: none; }
.mid { width: 83px; }
.via { width: 150px; }
.grid { width: 167px; }
.zoom { width: 95px; }
.line hr { width: auto; height: 1px; margin: 0 17px 0 7px; border: 0; background: #dadada; pointer-events: none; }
.layerbox { display: flex; align-items: center; gap: 5px; width: 128px; height: 18px; padding-left: 3px; background: #fff; border: 1px solid #8b8b8b; }
.layerbox select { appearance: none; flex: 1; outline: 0; }
.layerbox .sw { width: 12px; height: 12px; }
.drop { width: 18px; height: 18px; margin: 0 0 0 3px; background: #fff; border-radius: 5px; box-shadow: 0 0 1px #0005; display: grid; place-items: center; }
.drop svg { width: 10px; height: 10px; }

.check { display: flex; align-items: center; gap: 5px; }
.check input { appearance: none; flex: none; width: 12px; height: 12px; border-radius: 3px; background: #fff; box-shadow: 0 0 1px #0006; display: grid; place-items: center; }
.check input:checked { background: #3f7ddb; }
.check input:checked::after { content: ""; width: 4px; height: 8px; border: solid #fff; border-width: 0 2px 2px 0; transform: rotate(40deg); margin-bottom: 2px; }

.work { flex: 1; min-height: 0; display: flex; }
.left { flex: none; width: 247px; display: flex; flex-direction: column; border-right: 1px solid #d8d8d8; }
.cap { flex: none; height: 14px; background: #bdb9b9; font-size: 10px; font-weight: 500; line-height: 13px; color: #333; }
.left .cap { display: flex; justify-content: flex-end; align-items: center; padding-right: 2px; }
.x { width: 12px; height: 12px; }
.x svg { display: block; }
.list { flex: 1; margin-top: 24px; background: #fff; }

.tools { flex: none; width: 35px; padding: 3px 0 0 6px; display: flex; flex-direction: column; }
.tools.right { padding: 1px 0 0 1px; }
.hsep { flex: none; width: 19px; height: 1px; margin: 3px 4px; background: #c2c2c2; }

.canvas { flex: 1; min-width: 0; overflow: hidden; background: #000e20; }
.canvas svg { display: block; width: 100%; height: 100%; }
.silk { fill: none; stroke: #fbf3a2; stroke-width: 2.400; stroke-linecap: round; }
.silk .bar4 { stroke-width: 4; }
.silk .bar6 { stroke-width: 6; }
.track { fill: none; stroke: #c83434; stroke-linecap: round; stroke-linejoin: round; }
.yard { fill: none; stroke: #b325ae; stroke-width: 1; }
.clear { fill: none; stroke: #7a2f3a; stroke-width: 1; }
.pads { fill: #c83434; }
.rats { fill: none; stroke: #2f6474; stroke-width: 1; opacity: .65; }
.padtext, .label { font-family: "DejaVu Sans Mono", monospace; text-anchor: middle; }
.padtext { fill: #e0dbd0; fill-opacity: .88; }
.label { font-size: 31px; fill: #fbf3a2; stroke: #fbf3a2; stroke-width: 0.500; stroke-linejoin: round; }
.f4 { font-size: 4px; fill-opacity: .6; }
.f5 { font-size: 5px; }
.f7 { font-size: 7px; }
.f8 { font-size: 8px; }
.f9 { font-size: 9px; }
.f11 { font-size: 11px; }
.f12 { font-size: 12px; }
.f15 { font-size: 15px; }
.f16 { font-size: 16px; }
.f17 { font-size: 17px; }
.f23 { font-size: 23px; }
.f24 { font-size: 24px; }
.f29 { font-size: 29px; }
.f39 { font-size: 39px; }
.f59 { font-size: 59px; }

.panel { flex: none; width: 171px; display: flex; flex-direction: column; border-left: 1px solid #cdcdcd; background: #e6e6e6; font-size: 10px; line-height: 13px; }
.panel .cap { padding-left: 1px; }
.tabs { flex: none; display: grid; grid-template-columns: 48px 52px 42px; align-self: flex-start; height: 17px; margin: 11px 0 5px 15px; border-radius: 5px; background: #dcdcdc; }
.tabs .active { background: #fff; border-radius: 5px; box-shadow: 0 0 2px #0004; }
.layers { flex: none; display: grid; grid-template-rows: repeat(24, 1fr); height: 363px; list-style: none; }
.layers li { display: flex; align-items: center; margin-left: 2px; }
.layers .current { background: #f5f5f5; }
.layers b { width: 13px; }
.layers .current b::before { content: ""; display: block; width: 0; margin-left: 4px; border: 4px solid transparent; border-left: 5px solid #3f7ddb; border-right: 0; }
.layers svg { width: 14px; height: 14px; margin: 0 4px 0 5px; }
.sw { width: 13px; height: 10px; }
.cu { background: #a83038; }
.blue { background: #4480dc; }
.purple { background: #7f2580; }
.navy { background: #08085a; }
.paste { background: #8f9184; }
.bpaste { background: repeating-linear-gradient(45deg, #4480dc 0 4px, #7c88a0 4px 5px); }
.cream { background: #fbf3a2; }
.peach { background: #e2aa96; }
.fmask { background: repeating-linear-gradient(90deg, #4a2458 0 4px, #7f2580 4px 7px); }
.bmask { background: #35505c; }
.gray { background: #b9b9b7; }
.steel { background: #b7bec9; }
.coral { background: #d58476; }
.edge { background: #c9c9c4; }
.magenta { background: #c826b8; }
.sky { background: #6fa6da; }
.ffab { background: #a0a298; }
.bfab { background: #456494; }

.disclose { flex: none; display: flex; align-items: center; gap: 2px; height: 22px; margin-top: auto; padding-left: 11px; background: #e2e2e2; }
.disclose b { border: 4px solid transparent; border-left: 5px solid #111; border-right: 0; }
.views { flex: none; display: grid; padding: 2px 1px 1px 5px; line-height: 16px; background: #e8e8e8; }
.views .combo { margin: 0 0 1px; height: 17px; }
.views .combo select { height: 17px; }
.views .grip { width: 5px; height: 5px; margin: 4px auto 0; border-radius: 50%; background: #cfcfcf; }
.filter { flex: none; display: grid; grid-template-columns: 84px 1fr; grid-template-rows: repeat(7, 1fr); height: 94px; margin: 5px 0 3px; padding-left: 3px; white-space: nowrap; background: #e8e8e8; }

.info { flex: none; display: grid; grid-template-columns: 47px 44px 97px 46px auto; justify-content: start; height: 23px; padding: 1px 5px; font-size: 10px; line-height: 11px; }
.status { flex: none; display: grid; grid-template-columns: 601fr 52fr 142fr 230fr 136fr 38fr 401fr; align-items: center; height: 23px; border-top: 1px solid #c4c4c4; background: linear-gradient(#dcdcdc, #cccccc); color: #8f8f8f; font-size: 10px; line-height: 12px; white-space: nowrap; }

.menu { position: absolute; left: 0; top: 34px; width: 182px; display: grid; padding: 5px 0; background: #e1e3e6; border-radius: 6px; box-shadow: 0 0 1px #0008, 0 3px 8px #0004; }
.menu button { display: flex; align-items: center; height: 18px; padding-left: 8px; text-align: left; white-space: nowrap; }
.menu i { width: 13px; font-style: normal; font-weight: 700; }
.menu hr { width: 158px; height: 1px; margin: 4px 12px 5px; border: 0; background: #c9cbce; }
```
